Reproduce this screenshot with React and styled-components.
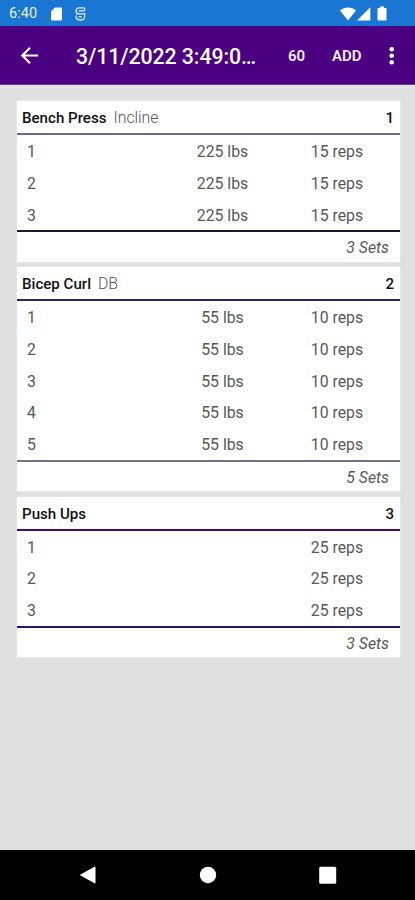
import React from 'react';
import styled, { createGlobalStyle } from 'styled-components';

const GlobalStyle = createGlobalStyle`
  * { box-sizing: border-box; }
  body { margin: 0; font-family: Roboto, "Liberation Sans", sans-serif; background: #e0e0e0; }
`;

const Screen = styled.div`
  width: 415px;
  height: 900px;
  display: flex;
  flex-direction: column;
  background: #e0e0e0;
  overflow: hidden;
`;

const StatusBar = styled.div`
  height: 26px;
  flex: none;
  display: flex;
  align-items: center;
  padding: 1px 28px 0 9px;
  background: #1976d2;
  color: #e8f2fc;
`;

const Clock = styled.span`
  width: 42px;
  padding-top: 1px;
  font-size: 14.5px;
  line-height: 16px;
  letter-spacing: 0.1px;
`;

const StatusIcon = styled.svg`
  display: block;
  flex: none;
  margin-left: ${(p) => p.$gap || 0}px;
`;

const Spacer = styled.div`
  flex: 1;
`;

const AppBar = styled.header`
  height: 59px;
  flex: none;
  display: flex;
  align-items: center;
  padding: 1px 0 0 20px;
  background: #4b0082;
  border-bottom: 1px solid #6d3c97;
  color: #fff;
`;

const IconButton = styled.button`
  display: block;
  padding: 0;
  border: 0;
  background: none;
  color: inherit;
  svg { display: block; }
`;

const Title = styled.h1`
  margin: 0 0 0 37px;
  padding-top: 2px;
  width: 180px;
  font-size: 21.3px;
  line-height: 28px;
  font-weight: 500;
  letter-spacing: -0.08px;
  white-space: nowrap;
`;

const Action = styled.button`
  width: ${(p) => p.$width}px;
  margin-left: ${(p) => p.$gap}px;
  padding: 1px 0 0;
  border: 0;
  background: none;
  color: #f4ecfa;
  font: 600 15px/20px Roboto, sans-serif;
  text-align: left;
  white-space: nowrap;
`;

const Content = styled.main`
  flex: 1;
  display: flex;
  flex-direction: column;
  gap: 5.3px;
  padding: 16px 15px 0 16.5px;
`;

const Card = styled.section`
  background: #fff;
  box-shadow: 0 0 1.5px rgba(255, 255, 255, 0.8);
`;

const CardHeader = styled.div`
  height: 34px;
  display: flex;
  align-items: baseline;
  padding: 8px 6px 0 5.5px;
  border-bottom: 2px solid ${(p) => p.$line};
  font-size: 15.1px;
  line-height: 18px;
  font-weight: 500;
  color: #111;
`;

const Variant = styled.span`
  margin-left: 7px;
  font-weight: 300;
  font-size: 15.8px;
  color: #555;
`;

const Position = styled.span`
  margin-left: auto;
`;

const SetRow = styled.div`
  height: 31.75px;
  display: grid;
  grid-template-columns: 138px 115px 114px;
  align-items: center;
  padding: 1.5px 0 0 10.5px;
  font-size: 15.8px;
  font-weight: 400;
  color: #585858;
`;

const Measure = styled.span`
  text-align: center;
`;

const CardFooter = styled.div`
  height: 31.5px;
  display: flex;
  justify-content: flex-end;
  align-items: center;
  padding: 1px 11px 0 0;
  border-top: 2px solid ${(p) => p.$line};
  font-size: 15.8px;
  font-style: italic;
  color: #585858;
`;

const NavBar = styled.nav`
  height: 50px;
  flex: none;
  display: grid;
  grid-template-columns: repeat(3, 120px);
  justify-content: center;
  align-items: center;
  justify-items: center;
  background: #000;
`;

const exercises = [
  { name: 'Bench Press', variant: 'Incline', sets: 3, weight: '225 lbs', reps: '15 reps', top: '#6d6a94', bottom: '#1c1838' },
  { name: 'Bicep Curl', variant: 'DB', sets: 5, weight: '55 lbs', reps: '10 reps', top: '#29245c', bottom: '#73718f' },
  { name: 'Push Ups', sets: 3, weight: '', reps: '25 reps', top: '#430b6b', bottom: '#2b1760' },
];

function Exercise({ item, position }) {
  return (
    <Card>
      <CardHeader $line={item.top}>
        {item.name}
        {item.variant && <Variant>{item.variant}</Variant>}
        <Position>{position}</Position>
      </CardHeader>
      {Array.from({ length: item.sets }, (_, i) => (
        <SetRow key={i}>
          <span>{i + 1}</span>
          <Measure>{item.weight}</Measure>
          <Measure>{item.reps}</Measure>
        </SetRow>
      ))}
      <CardFooter $line={item.bottom}>{item.sets} Sets</CardFooter>
    </Card>
  );
}

export default function App() {
  return (
    <Screen>
      <GlobalStyle />
      <StatusBar>
        <Clock>6:40</Clock>
        <StatusIcon width="11" height="14" viewBox="0 0 11 14">
          <path d="M4 .5h6a1 1 0 0 1 1 1v11a1 1 0 0 1-1 1H1a1 1 0 0 1-1-1v-8z" fill="#fff" />
          <path d="M4 2.5v2M6 2.5v2M8 2.5v2" stroke="#c5def5" strokeWidth=".8" />
        </StatusIcon>
        <StatusIcon $gap={13} width="11" height="14" viewBox="0 0 11 14" fill="none" stroke="#dcecfb" strokeWidth="1.3">
          <path d="M9.700 3.500V2.200Q9.700 .9 8.400 .9H4Q1 .9 1 3.800T4 6.800H9.700V9.500Q9.700 13 5.300 13T1 9.500V8.500M3.500 3.800H9.700M1 6.800H4M3.500 9.800H7" />
        </StatusIcon>
        <Spacer />
        <StatusIcon width="17" height="14" viewBox="0 0 17 14">
          <path d="M0 3.500C4.500-.5 11.500-.5 16 3.500L8 13.500z" fill="#fff" />
        </StatusIcon>
        <StatusIcon width="14" height="14" viewBox="0 0 14 14">
          <path d="M13.300 .2v13.300H0z" fill="#fff" />
        </StatusIcon>
        <StatusIcon $gap={6} width="10" height="15" viewBox="0 0 10 15">
          <path d="M3 .5h4v1.500h1.500a1 1 0 0 1 1 1V13.500a1 1 0 0 1-1 1h-7a1 1 0 0 1-1-1V3a1 1 0 0 1 1-1H3z" fill="#fff" />
        </StatusIcon>
      </StatusBar>
      <AppBar>
        <IconButton aria-label="Back">
          <svg width="19" height="18" viewBox="0 0 19 18" fill="none" stroke="currentColor" strokeWidth="2.200">
            <path d="M18.200 8.500H2.500M10 .8L2.300 8.500L10 16.200" />
          </svg>
        </IconButton>
        <Title>3/11/2022 3:49:0…</Title>
        <Action $width={18} $gap={32}>60</Action>
        <Action $width={30} $gap={26}>ADD</Action>
        <Spacer />
        <IconButton aria-label="More">
          <svg width="48" height="20" viewBox="0 0 48 20" fill="currentColor">
            <circle cx="24.700" cy="3.200" r="2.300" />
            <circle cx="24.700" cy="9.700" r="2.300" />
            <circle cx="24.700" cy="16.200" r="2.300" />
          </svg>
        </IconButton>
      </AppBar>
      <Content>
        {exercises.map((item, i) => (
          <Exercise key={item.name} item={item} position={i + 1} />
        ))}
      </Content>
      <NavBar>
        <svg width="18" height="18" viewBox="0 0 18 18">
          <path d="M1.500 9L16 1v16z" fill="#fff" stroke="#fff" strokeLinejoin="round" />
        </svg>
        <svg width="18" height="18" viewBox="0 0 18 18">
          <circle cx="9" cy="9" r="8.200" fill="#fff" />
        </svg>
        <svg width="18" height="18" viewBox="0 0 18 18">
          <rect x=".2" y=".8" width="17" height="17" rx="1.500" fill="#fff" />
        </svg>
      </NavBar>
    </Screen>
  );
}
